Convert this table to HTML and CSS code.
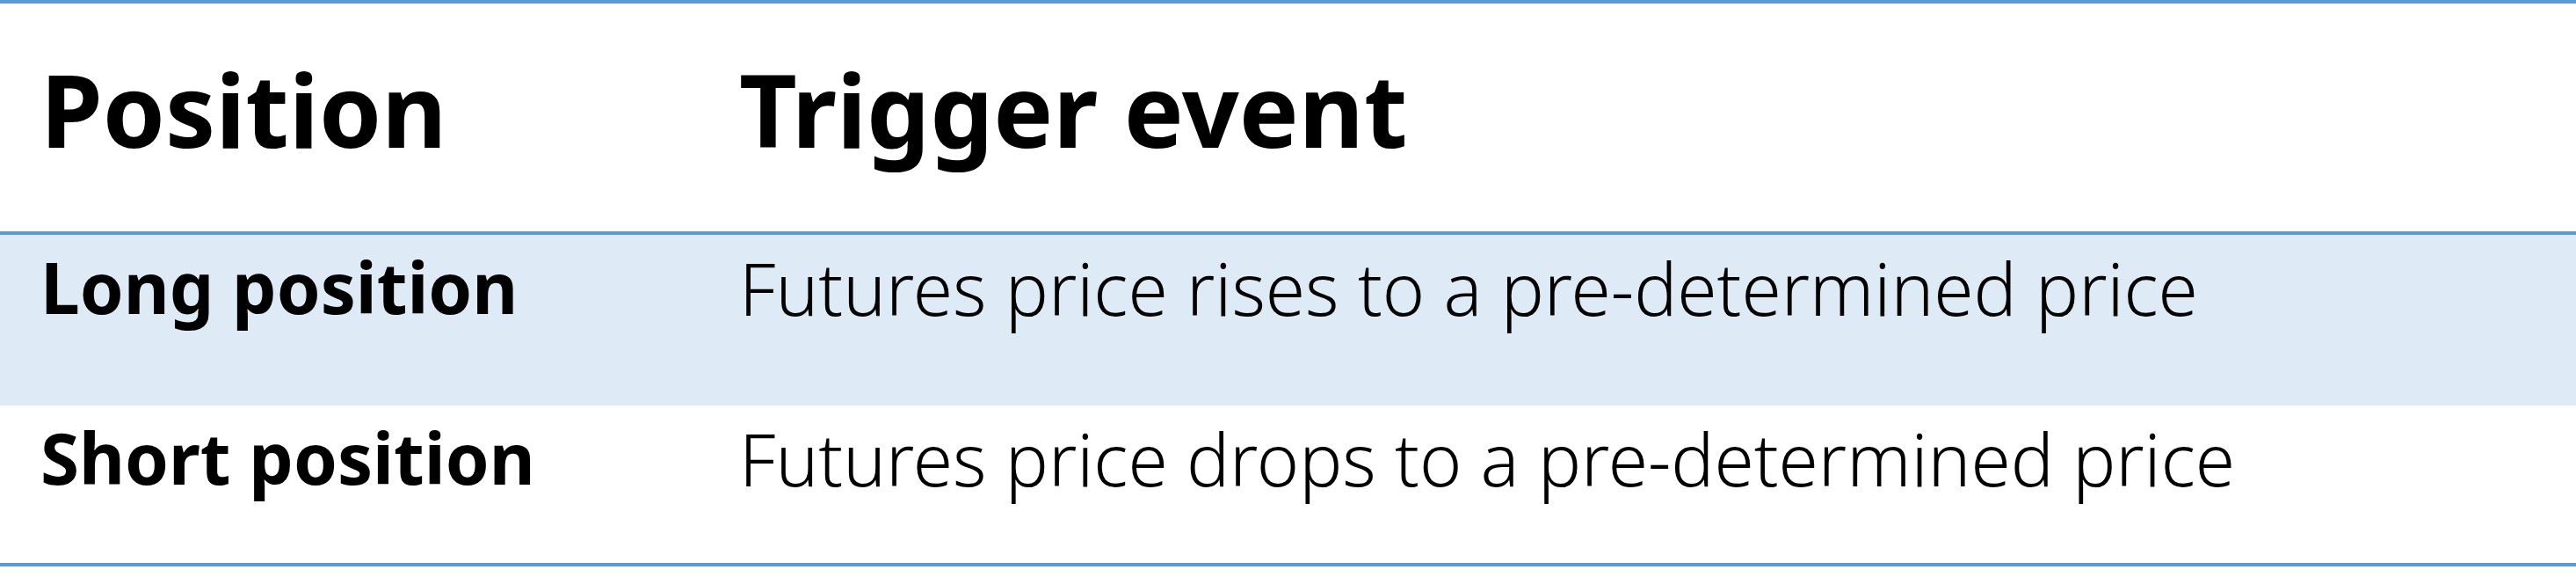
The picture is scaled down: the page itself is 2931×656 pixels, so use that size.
FILE: index.html
```html
<!DOCTYPE html>
<html lang="en">
<head>
<meta charset="utf-8">
<title>Position triggers</title>
<link rel="stylesheet" href="styles.css">
</head>
<body>
<div class="table">
  <div class="row head">
    <div class="cell c1">Position</div>
    <div class="cell c2">Trigger event</div>
  </div>
  <div class="row alt r1">
    <div class="cell c1 label">Long position</div>
    <div class="cell c2 desc">Futures price rises to a pre-determined price</div>
  </div>
  <div class="row r2">
    <div class="cell c1 label">Short position</div>
    <div class="cell c2 desc">Futures price drops to a pre-determined price</div>
  </div>
</div>
</body>
</html>
```

FILE: styles.css
```css
html, body {
  margin: 0;
  padding: 0;
  background: #ffffff;
}
body {
  font-family: "Noto Sans", "Open Sans", sans-serif;
  color: #000000;
  width: 2931px;
}
.table {
  border-top: 4px solid #5b9bd5;
  border-bottom: 4px solid #5b9bd5;
}
.row {
  display: flex;
  align-items: flex-start;
}
.cell {
  line-height: 1;
  white-space: nowrap;
}
.c1 {
  width: 795px;
  padding-left: 46px;
  flex: none;
}
.c2 {
  flex: 1;
}
.head {
  box-sizing: border-box;
  height: 263px;
  border-bottom: 4px solid #5b9bd5;
}
.head .cell {
  font-size: 114px;
  font-weight: 700;
  padding-top: 63px;
}
.alt {
  background: #deebf7;
}
.r1 {
  height: 194px;
}
.r2 {
  height: 179px;
}
.label {
  font-size: 80px;
  font-weight: 700;
  padding-top: 19px;
}
.desc {
  font-size: 82px;
  font-weight: 300;
  padding-top: 19px;
}
```
